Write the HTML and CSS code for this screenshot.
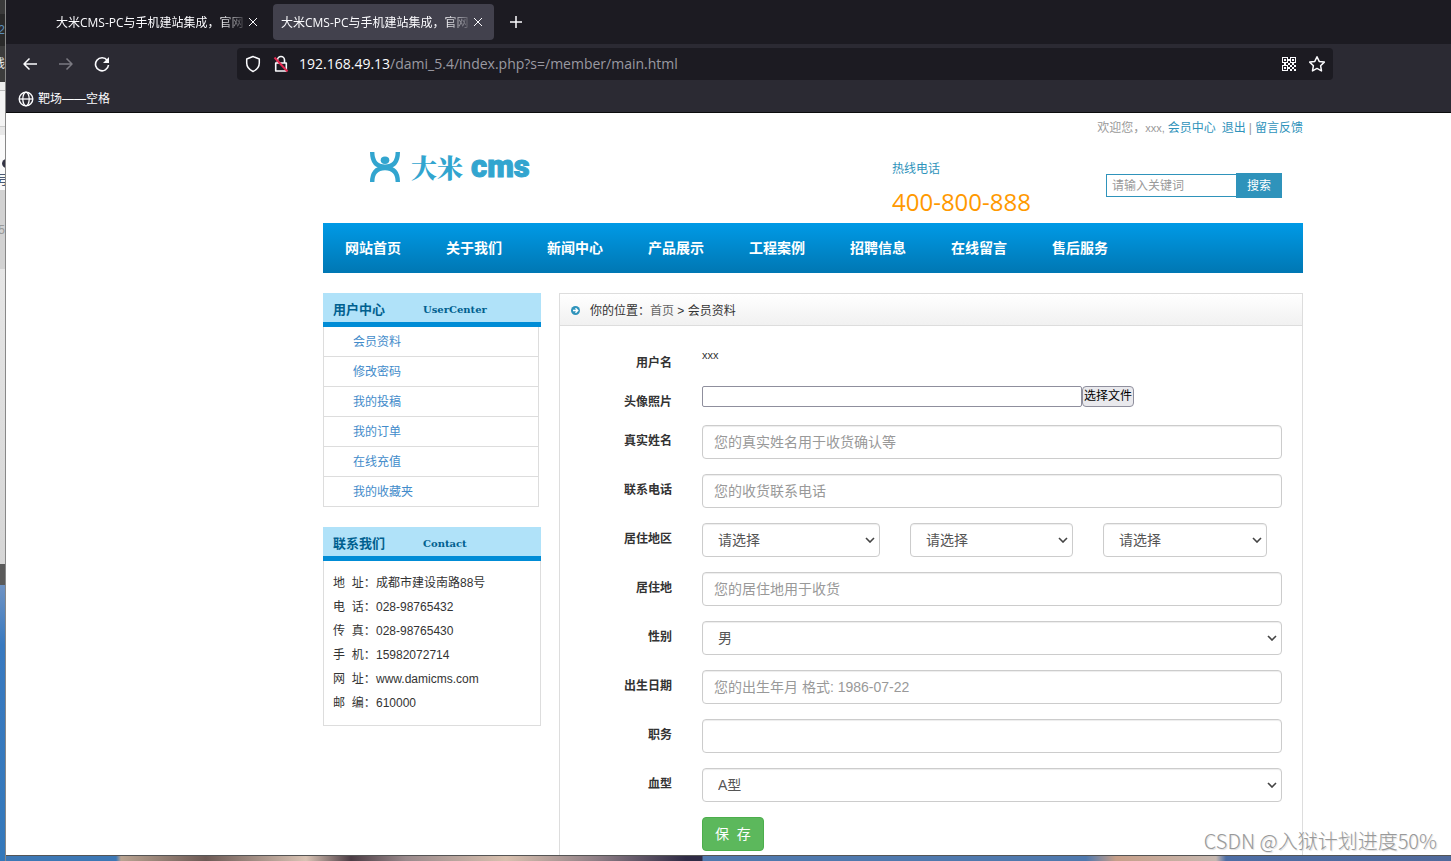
FILE: index.html
```html
<!DOCTYPE html>
<html lang="zh-CN">
<head>
<meta charset="utf-8">
<title>大米CMS-PC与手机建站集成，官网</title>
<link rel="stylesheet" href="styles.css">
</head>
<body>
<div class="desktop">
  <div class="behind" aria-hidden="true">
    <div class="behind-tabs"><span class="tan">3</span><span class="sky">2</span></div>
    <div class="behind-tools"><span>线</span></div>
    <div class="behind-bar"></div>
    <div class="behind-text"><i class="dot"></i><span>号</span></div>
    <div class="behind-band"><span>5</span></div>
    <div class="behind-page"></div>
    <div class="behind-foot"></div>
    <div class="behind-wall"></div>
  </div>

  <div class="browser">
    <div class="tabs">
      <div class="tab"><span class="tab-title">大米CMS-PC与手机建站集成，官网</span>
        <button class="icon-btn" aria-label="关闭标签"><svg width="10" height="10" viewBox="0 0 10 10"><path d="M1 1l8 8M9 1l-8 8"/></svg></button></div>
      <div class="tab active"><span class="tab-title">大米CMS-PC与手机建站集成，官网</span>
        <button class="icon-btn" aria-label="关闭标签"><svg width="10" height="10" viewBox="0 0 10 10"><path d="M1 1l8 8M9 1l-8 8"/></svg></button></div>
      <button class="icon-btn new-tab" aria-label="新建标签"><svg width="12" height="12" viewBox="0 0 12 12"><path d="M6 0v12M0 6h12" stroke-width="1.5"/></svg></button>
    </div>
    <div class="toolbar">
      <div class="nav-buttons">
        <button class="icon-btn" aria-label="后退"><svg width="16" height="16" viewBox="0 0 16 16"><path d="M15 8H2M7.500 2.500L2 8l5.500 5.500" stroke-width="1.500" stroke-linejoin="round"/></svg></button>
        <button class="icon-btn dim" aria-label="前进"><svg width="16" height="16" viewBox="0 0 16 16"><path d="M1 8h13M8.500 2.500L14 8l-5.500 5.500" stroke-width="1.500" stroke-linejoin="round"/></svg></button>
        <button class="icon-btn" aria-label="刷新"><svg width="16" height="16" viewBox="0 0 16 16"><path d="M13.300 4.500A6.500 6.500 0 1 0 14.500 9" stroke-width="1.600"/><path d="M15 1v6H9z" class="solid"/></svg></button>
      </div>
      <div class="url">
        <svg width="16" height="18" viewBox="0 0 16 18"><path d="M8 1.500L14.300 4v4c0 4-2.500 6.700-6.300 8.500C4.200 14.700 1.700 12 1.700 8V4z" stroke-width="1.500" stroke-linejoin="round"/></svg>
        <svg width="16" height="18" viewBox="0 0 16 18"><path d="M4.500 8V5a3.500 3.500 0 0 1 7 0v3M2.700 8h10.600v8H2.700z" stroke-width="1.600" stroke-linejoin="round"/><path d="M1.500 2.500l13 14" class="slash"/></svg>
        <span class="address"><b>192.168.49.13</b>/dami_5.4/index.php?s=/member/main.html</span>
        <svg class="solid" width="14" height="14" viewBox="0 0 14 14" shape-rendering="crispEdges"><path fill-rule="evenodd" d="M0 0h6v6H0zM1 1v4h4V1zM8 0h6v6H8zM9 1v4h4V1zM0 8h6v6H0zM1 9v4h4V9z"/><path d="M2 2h2v2H2zM10 2h2v2h-2zM2 10h2v2H2zM6 2h2v2H6zM6 6h2v2H6zM8 8h2v2H8zM10 6h2v2h-2zM12 8h2v2h-2zM10 10h2v2h-2zM8 12h2v2H8zM12 12h2v2h-2zM6 10h2v2H6zM2 6h2v2H2z"/></svg>
        <svg width="18" height="18" viewBox="0 0 18 18"><path d="M9 1.700l2.200 4.700 5.100.7-3.700 3.600.9 5.200L9 13.400l-4.500 2.500.9-5.200-3.700-3.600 5.100-.7z" stroke-width="1.500" stroke-linejoin="round"/></svg>
      </div>
    </div>
    <div class="bookmarks">
      <svg width="16" height="16" viewBox="0 0 16 16"><circle cx="8" cy="8" r="6.800" stroke-width="1.400"/><ellipse cx="8" cy="8" rx="3.200" ry="6.800" stroke-width="1.300"/><path d="M1 8h14" stroke-width="1.300"/></svg>
      <span>靶场——空格</span>
    </div>

    <div class="page">
      <div class="wrap">
        <div class="userbar"><span>欢迎您，<span class="narrow">xxx,</span></span><a href="#">会员中心</a><a href="#" class="exit">退出</a><span>|</span><a href="#">留言反馈</a></div>
        <header class="header">
          <a href="#" class="logo">
            <svg width="32" height="32" viewBox="0 0 32 32"><path d="M3.200 1c0 8.500 3.300 14.700 12.800 14.700S28.800 9.500 28.800 1M3.200 31c0-8.500 3.300-14 12.800-14S28.800 22.500 28.800 31" stroke-width="4.400"/><ellipse cx="16" cy="9.200" rx="4.300" ry="3.700" class="solid"/></svg>
            <span class="logo-cn">大米</span><span class="logo-en">cms</span>
          </a>
          <div class="hotline"><span>热线电话</span><strong>400-800-888</strong></div>
          <form class="search"><input type="text" aria-label="关键词" placeholder="请输入关键词"><button type="button">搜索</button></form>
        </header>
        <nav class="menu">
          <a href="#">网站首页</a><a href="#">关于我们</a><a href="#">新闻中心</a><a href="#">产品展示</a><a href="#">工程案例</a><a href="#">招聘信息</a><a href="#">在线留言</a><a href="#">售后服务</a>
        </nav>
        <div class="columns">
          <aside class="side">
            <h2 class="side-title"><span>用户中心</span><span>UserCenter</span></h2>
            <ul class="side-list">
              <li><a href="#">会员资料</a></li><li><a href="#">修改密码</a></li><li><a href="#">我的投稿</a></li><li><a href="#">我的订单</a></li><li><a href="#">在线充值</a></li><li><a href="#">我的收藏夹</a></li>
            </ul>
            <h2 class="side-title"><span>联系我们</span><span>Contact</span></h2>
            <div class="contact">
              <p><span>地&nbsp; 址：</span>成都市建设南路88号</p>
              <p><span>电&nbsp; 话：</span>028-98765432</p>
              <p><span>传&nbsp; 真：</span>028-98765430</p>
              <p><span>手&nbsp; 机：</span>15982072714</p>
              <p><span>网&nbsp; 址：</span>www.damicms.com</p>
              <p><span>邮&nbsp; 编：</span>610000</p>
            </div>
          </aside>
          <main class="main">
            <div class="crumbs">
              <svg width="9" height="9" viewBox="0 0 9 9"><circle cx="4.500" cy="4.500" r="4.500" class="disc"/><path d="M2 4.500h4.500M4.500 2.200l2.300 2.300-2.300 2.300" class="mark"/></svg>
              <span>你的位置：<a href="#">首页</a> &gt; 会员资料</span>
            </div>
            <form class="form">
              <div class="row"><span class="label">用户名</span><span class="value narrow">xxx</span></div>
              <div class="row"><label class="label" for="photo">头像照片</label><div class="file"><input id="photo" type="text"><button type="button">选择文件</button></div></div>
              <div class="row"><label class="label" for="name">真实姓名</label><input class="control" id="name" type="text" placeholder="您的真实姓名用于收货确认等"></div>
              <div class="row"><label class="label" for="tel">联系电话</label><input class="control" id="tel" type="text" placeholder="您的收货联系电话"></div>
              <div class="row"><label class="label" for="prov">居住地区</label><div class="region">
                <div class="pick"><select class="control" id="prov"><option>请选择</option></select><svg width="10" height="6" viewBox="0 0 10 6"><path d="M1 1l4 4 4-4"/></svg></div>
                <div class="pick"><select class="control" aria-label="城市"><option>请选择</option></select><svg width="10" height="6" viewBox="0 0 10 6"><path d="M1 1l4 4 4-4"/></svg></div>
                <div class="pick"><select class="control" aria-label="区县"><option>请选择</option></select><svg width="10" height="6" viewBox="0 0 10 6"><path d="M1 1l4 4 4-4"/></svg></div>
              </div></div>
              <div class="row"><label class="label" for="addr">居住地</label><input class="control" id="addr" type="text" placeholder="您的居住地用于收货"></div>
              <div class="row"><label class="label" for="sex">性别</label><div class="pick"><select class="control" id="sex"><option>男</option><option>女</option></select><svg width="10" height="6" viewBox="0 0 10 6"><path d="M1 1l4 4 4-4"/></svg></div></div>
              <div class="row"><label class="label" for="birth">出生日期</label><input class="control" id="birth" type="text" placeholder="您的出生年月 格式: 1986-07-22"></div>
              <div class="row"><label class="label" for="job">职务</label><input class="control" id="job" type="text"></div>
              <div class="row"><label class="label" for="blood">血型</label><div class="pick"><select class="control" id="blood"><option>A型</option><option>B型</option></select><svg width="10" height="6" viewBox="0 0 10 6"><path d="M1 1l4 4 4-4"/></svg></div></div>
              <div class="row"><span class="label"></span><button class="save" type="button">保&nbsp; 存</button></div>
            </form>
          </main>
        </div>
      </div>
    </div>
  </div>
  <div class="wallpaper"></div>
  <div class="watermark">CSDN @入狱计划进度50%</div>
</div>
</body>
</html>
```
FILE: styles.css
```css
* { box-sizing: border-box; }
body { margin: 0; font: 12px/18px "Liberation Sans", "Noto Sans CJK SC", sans-serif; color: #333; }
button, input, select { font: inherit; margin: 0; }
h2, p, ul { margin: 0; padding: 0; }
ul { list-style: none; }
a { text-decoration: none; color: #2f93bb; }
svg { fill: none; stroke: currentColor; flex: none; display: block; }
.solid { fill: currentColor; stroke: none; }

.desktop { position: relative; display: grid; grid-template: minmax(0, 1fr) 6px / 6px minmax(0, 1fr); height: 100vh; overflow: hidden; }
.behind { grid-row: 1 / 3; display: flex; flex-direction: column; overflow: hidden; border-right: 1px solid #888; }
.behind > div { display: flex; align-items: center; justify-content: flex-end; flex: none; overflow: hidden; }
.behind-tabs { height: 46px; padding-top: 14px; background: linear-gradient(#3a3a3a 14px, #2a2a2a 14px); }
.tan { color: #b98a5a; }
.sky { color: #5b8db8; }
.behind-tools { height: 36px; color: #eee; background: #3c3c3c; }
.behind-bar { height: 53px; background: linear-gradient(#ededed 8px, #bbb 8px, #bbb 9px, #f4f4f4 9px, #f4f4f4 44px, #ccc 44px, #ccc 45px, #e8e8e8 45px); }
.behind-text { height: 55px; gap: 4px; background: #fafafa; color: #235; flex-direction: column; }
.behind-text .dot { width: 10px; height: 9px; margin-top: 16px; border-radius: 50%; background: #334; align-self: flex-start; margin-left: 2px; flex: none; }
.behind-band { height: 79px; color: #999; background: #d2d2d2; }
.behind-page { height: 295px; background: linear-gradient(#e6e6e6, #d6d6d6); }
.behind-foot { height: 21px; background: #5a5a5a; }
.behind .behind-wall { flex: 1; background: linear-gradient(#6f93c4, #3879bf 60px, #3478ba); }
.wallpaper { background: linear-gradient(90deg, #3d78b5 0, #3d78b5 110px, #b9a391 115px, #6d5a55 200px, #d9c3b4 300px, #4b3c44 345px, #9a8a8c 400px, #d8c0ae 500px, #8f7f86 590px, #2f2b45 680px, #2f2b45 696px, #4f79ae 697px, #4f79ae 1080px, #c79f89 1110px, #c6b8b0 1210px, #4d6ea5 1220px, #50699b); border-top: 1px solid #555; }

.browser { display: flex; flex-direction: column; overflow: hidden; background: #fff; }
.tabs { display: flex; align-items: center; gap: 4px; height: 44px; padding-left: 42px; background: #1c1b22; color: #fbfbfe; font-family: "Open Sans", "Noto Sans CJK SC", sans-serif; line-height: 20px; flex: none; }
.tab { display: flex; align-items: center; justify-content: space-between; width: 221px; height: 36px; padding: 0 11px 0 8px; border-radius: 4px; }
.tab.active { background: #42414d; }
.tab-title { width: 192px; padding-top: 2px; overflow: hidden; white-space: nowrap; mask-image: linear-gradient(90deg, #000 164px, transparent); }
.icon-btn { display: flex; padding: 0; border: 0; background: none; color: #fbfbfe; }
.new-tab { margin-left: 12px; }
.toolbar { display: flex; align-items: center; height: 40px; padding: 0 118px 0 16px; background: #2b2a33; flex: none; }
.nav-buttons { display: flex; gap: 20px; width: 215px; flex: none; }
.dim { color: #7b7a82; }
.url { display: flex; align-items: center; gap: 12px; flex: 1; height: 32px; padding: 0 7px 0 8px; border-radius: 4px; background: #1c1b22; color: #fbfbfe; }
.slash { stroke: #e22850; stroke-width: 2; }
.address { flex: 1; margin-left: -2px; font: 14px/20px "Open Sans", sans-serif; color: #9a99a1; }
.address b { font-weight: 400; color: #fbfbfe; }
.bookmarks { display: flex; align-items: center; gap: 4px; height: 29px; padding: 2px 0 0 12px; background: #2b2a33; color: #fbfbfe; border-bottom: 1px solid #0c0c0d; flex: none; }

.page { flex: 1; padding-left: 317px; overflow: hidden; display: flex; }
.wrap { width: 980px; display: flex; flex-direction: column; flex: none; }
.userbar { display: flex; justify-content: flex-end; gap: 3px; height: 30px; line-height: 30px; color: #999; }
.exit { margin-left: 3px; }
.narrow { font-size: 11px; }
.header { display: flex; align-items: flex-start; height: 80px; }
.logo { display: flex; align-items: center; width: 569px; padding: 8px 0 0 46px; color: #32a5cf; }
.logo-cn { margin: 0 8px 0 10px; font: 900 26px/32px "Noto Serif CJK SC", "Noto Sans CJK SC", serif; }
.logo-en { font: 900 31px/32px Roboto, sans-serif; -webkit-text-stroke: 1px currentColor; }
.hotline { width: 214px; padding-top: 17px; color: #2f93bb; }
.hotline span, .hotline strong { display: block; }
.hotline strong { padding-top: 8px; font: 24px/32px "Open Sans", sans-serif; color: #f90; }
.search { display: flex; align-items: center; padding-top: 30px; }
.search input { width: 130px; height: 23px; padding: 0 5px; border: 1px solid #2f93bb; border-right: 0; border-radius: 0; }
.search input::placeholder, .control::placeholder { color: #999; opacity: 1; }
.search button { width: 46px; height: 25px; padding: 0; border: 0; background: #2f93bb; color: #fff; }
.menu { display: flex; gap: 45px; height: 50px; padding-left: 22px; background: linear-gradient(#009ae6, #0077b3); font-size: 14px; font-weight: 700; line-height: 50px; flex: none; }
.menu a { color: #fff; }
.columns { display: flex; flex: 1; gap: 18px; padding-top: 20px; }
.side { width: 218px; flex: none; }
.side-title { display: flex; height: 34px; padding-left: 10px; border-bottom: 5px solid #008cd6; background: #b0e2f9; color: #00608f; font: 700 10px/34px "DejaVu Serif", "Noto Sans CJK SC", serif; }
.side-title span:first-child { width: 90px; font-size: 13px; }
.side-list { width: 216px; margin-bottom: 20px; border: solid #ddd; border-width: 0 1px; }
.side-list li { height: 30px; padding-left: 29px; border-bottom: 1px solid #ddd; line-height: 30px; }
.side-list a { color: #428bca; }
.contact { padding: 10px 9px; border: 1px solid #ddd; border-top: 0; line-height: 24px; }
.contact p { display: flex; }
.contact span { width: 43px; white-space: nowrap; }
.main { flex: 1; border: 1px solid #ddd; border-bottom: 0; }
.crumbs { display: flex; align-items: center; gap: 10px; height: 32px; padding: 2px 0 0 11px; border-bottom: 1px solid #ddd; background: linear-gradient(#fff, #f1f1f1); }
.crumbs a { color: #666; }
.disc { fill: #2f93bb; stroke: none; }
.mark { stroke: #fff; stroke-width: 1.3; }
.form { display: flex; flex-direction: column; gap: 15px; padding: 21px 20px 0 0; }
.row { display: grid; grid-template-columns: 112px minmax(0, 1fr); column-gap: 30px; align-items: start; }
.label { padding-top: 8px; text-align: right; font-weight: 700; line-height: 16px; }
.value { line-height: 17px; }
.file { display: flex; }
.file input { width: 380px; height: 21px; border: 1px solid #8f8f9d; border-radius: 2px; }
.file button { width: 52px; height: 21px; padding: 0; border: 1px solid #8f8f9d; border-radius: 4px; background: #e9e9ed; color: #000; line-height: 19px; white-space: nowrap; }
.control { display: block; width: 100%; height: 34px; padding: 6px 11px; border: 1px solid #ccc; border-radius: 4px; background: #fff; box-shadow: inset 0 1px 1px rgba(0, 0, 0, .075); font-size: 14px; line-height: 20px; color: #555; }
select.control { appearance: none; padding: 6px 15px; }
.pick { position: relative; }
.pick svg { position: absolute; right: 5px; top: 14px; color: #444; stroke-width: 1.6; pointer-events: none; }
.region { display: grid; grid-template-columns: 178fr 163fr 164fr; gap: 30px; padding-right: 15px; }
.save { justify-self: start; height: 34px; padding: 0 12px; border: 1px solid #4cae4c; border-radius: 4px; background: #5cb85c; color: #fff; font-size: 14px; }
.watermark { position: absolute; right: 14px; bottom: 6px; font: 300 20px/28px "Noto Sans CJK SC", sans-serif; color: #999; text-shadow: 1px 1px 1px #ddd; }
```
